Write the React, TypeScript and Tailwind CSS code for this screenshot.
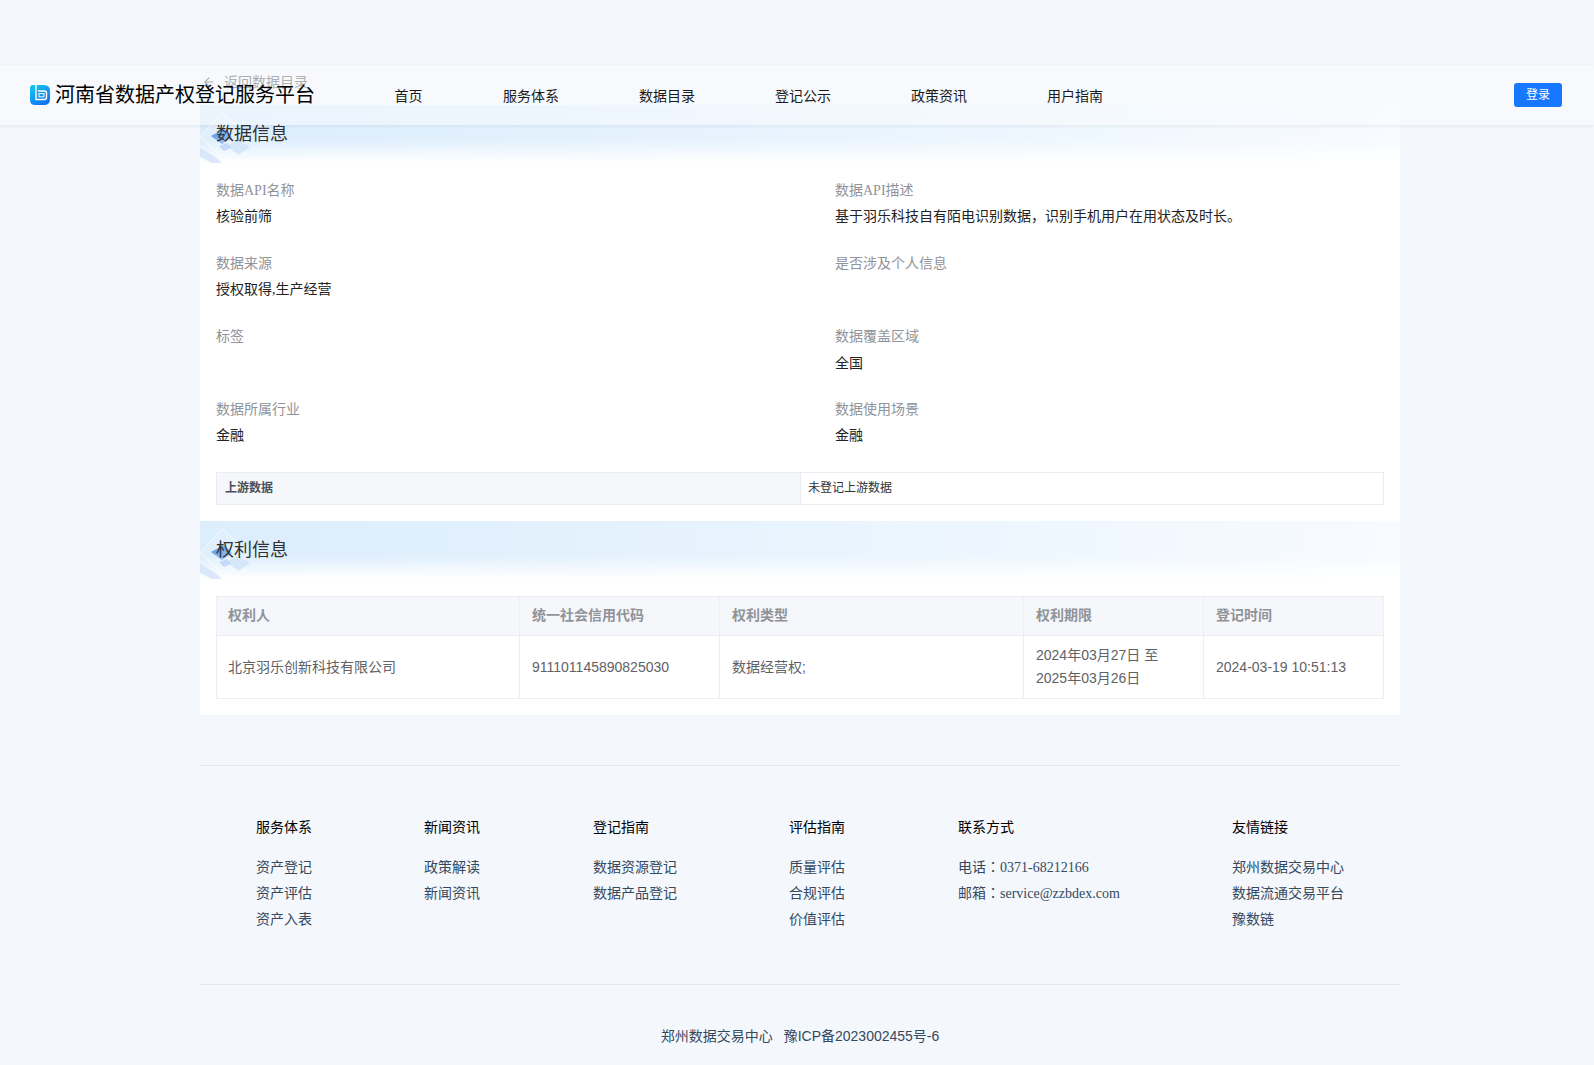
import { ArrowLeft } from 'lucide-react';

const cjk = 'font-["Liberation_Sans","Noto_Sans_CJK_SC",sans-serif]';
const serif = 'font-["Liberation_Serif","Noto_Sans_CJK_SC",serif]';

const nav = [
  { label: '首页', w: 'w-[108.5px]' },
  { label: '服务体系', w: 'w-[136px]' },
  { label: '数据目录', w: 'w-[136px]' },
  { label: '登记公示', w: 'w-[136px]' },
  { label: '政策资讯', w: 'w-[136px]' },
  { label: '用户指南', w: 'w-[136px]' },
];

const fields = [
  [
    { label: '数据API名称', value: '核验前筛' },
    { label: '数据API描述', value: '基于羽乐科技自有陌电识别数据，识别手机用户在用状态及时长。' },
  ],
  [
    { label: '数据来源', value: '授权取得,生产经营' },
    { label: '是否涉及个人信息', value: '' },
  ],
  [
    { label: '标签', value: '' },
    { label: '数据覆盖区域', value: '全国' },
  ],
  [
    { label: '数据所属行业', value: '金融' },
    { label: '数据使用场景', value: '金融' },
  ],
];

const footerCols = [
  { title: '服务体系', links: ['资产登记', '资产评估', '资产入表'], w: 'w-[168px]' },
  { title: '新闻资讯', links: ['政策解读', '新闻资讯'], w: 'w-[169px]' },
  { title: '登记指南', links: ['数据资源登记', '数据产品登记'], w: 'w-[196px]' },
  { title: '评估指南', links: ['质量评估', '合规评估', '价值评估'], w: 'w-[169px]' },
  { title: '联系方式', links: [], w: 'w-[274px]' },
  { title: '友情链接', links: ['郑州数据交易中心', '数据流通交易平台', '豫数链'], w: 'w-[160px]' },
];

function Logo() {
  return (
    <svg width="20" height="20" viewBox="0 0 20 20" className="shrink-0">
      <defs>
        <linearGradient id="logo" x1="0" y1="0" x2="0.6" y2="1">
          <stop offset="0" stopColor="#14cdea" />
          <stop offset="1" stopColor="#1473f5" />
        </linearGradient>
      </defs>
      <path d="M3 0H14Q20 0 20 6V14Q20 20 14 20H5Q0 20 0 15V3Q0 0 3 0Z" fill="url(#logo)" />
      <path d="M6 0V14.5H14.5Q16.5 14.5 16.5 12.5V8Q16.5 6 14.5 6H8" fill="none" stroke="#fff" strokeWidth="1.4" />
      <rect x="9" y="8.6" width="5" height="3.2" fill="none" stroke="#fff" strokeOpacity="0.9" strokeWidth="1.1" />
    </svg>
  );
}

function BandDecor({ id }: { id: string }) {
  return (
    <svg width="60" height="60" viewBox="0 0 60 60" className="absolute left-0 top-0 blur-[0.7px]">
      <defs>
        <linearGradient id={id} x1="0" y1="0" x2="1" y2="1">
          <stop offset="0" stopColor="#4f93ec" />
          <stop offset="1" stopColor="#a9cbf5" />
        </linearGradient>
      </defs>
      <path d="M22 8L50 32L26 56L0 32Z" fill="#ffffff" fillOpacity="0.15" stroke="#ffffff" strokeOpacity="0.7" />
      <path d="M11 31L24 24L32 32L22 39Z" fill={`url(#${id})`} />
      <path d="M27 41L38 35L50 42L38 50Z" fill="#cfe2f8" opacity="0.75" />
      <path d="M0 43L14 51L22 58H12L0 52Z" fill="#cfe2f8" opacity="0.75" />
      <path d="M19 41L27 38L31 43L24 46Z" fill="#b5d2f5" opacity="0.75" />
    </svg>
  );
}

function SectionTitle({ title, id }: { title: string; id: string }) {
  return (
    <div className="relative h-[58px] bg-gradient-to-r from-[#dcedfc] via-[#e8f4fe] to-[#f8fbff]">
      <div className="absolute inset-0 bg-gradient-to-b from-transparent from-[60%] to-white" />
      <BandDecor id={id} />
      <h2 className="relative pl-4 pt-[16px] text-[18px] leading-[26px] font-normal text-[#303133]">{title}</h2>
    </div>
  );
}

export default function App() {
  return (
    <div className={`relative min-h-[1065px] bg-[#f4f7fc] ${cjk}`}>
      <header className="absolute left-0 right-0 top-[65px] z-10 flex h-[60px] items-center bg-[#fafbfe]/50 shadow-[0_1px_4px_rgba(0,21,41,0.08)]">
        <div className="ml-[30px] flex w-[364.5px] items-center gap-[5px]">
          <Logo />
          <span className="text-[20px] leading-[28px] whitespace-nowrap text-black">河南省数据产权登记服务平台</span>
        </div>
        <nav className="flex pt-[2px]">
          {nav.map((n) => (
            <a key={n.label} className={`${n.w} text-[14px] leading-[20px] text-[#1a1a1a]`}>{n.label}</a>
          ))}
        </nav>
        <button className="absolute right-[32px] top-[18px] h-[24px] w-[48px] rounded-[3px] bg-[#1677ff] text-[12px] text-white">登录</button>
      </header>

      <main className="ml-[200px] w-[1200px] pt-[72px]">
        <div className="flex h-[33px] items-center pb-[13px] pl-[2px] text-[14px] leading-[20px] text-[#606266]">
          <ArrowLeft size={14} />
          <span className="ml-[8px]">返回数据目录</span>
        </div>

        <section className="bg-white pb-[16px]">
          <SectionTitle title="数据信息" id="d1" />
          <div className="px-4 pt-[18px]">
            {fields.map((row, i) => (
              <div key={i} className="grid h-[73px] grid-cols-[619px_1fr]">
                {row.map((f) => (
                  <div key={f.label} className={serif}>
                    <div className="text-[14px] leading-[20px] text-[#909399]">{f.label}</div>
                    <div className={`${i === 2 ? 'mt-[7px]' : 'mt-[6px]'} text-[14px] leading-[20px] text-[#222222]`}>{f.value}</div>
                  </div>
                ))}
              </div>
            ))}
            <div className="-mt-[1px] flex h-[33px] border border-[#e9ecf5] text-[12px]">
              <div className="flex w-[584px] items-center border-r border-[#e9ecf5] bg-[#f5f7fa] pb-[2px] pl-2 font-bold text-[#4a4f59]">上游数据</div>
              <div className="flex flex-1 items-center pb-[2px] pl-[7px] text-[#303133]">未登记上游数据</div>
            </div>
          </div>
        </section>

        <section className="bg-white pb-[16px]">
          <SectionTitle title="权利信息" id="d2" />
          <div className="px-4 pt-[17px]">
            <div className="border border-[#ebeef5] text-[14px] text-[#606266]">
              <div className="grid h-[39px] grid-cols-[302px_200px_304px_180px_1fr] items-center border-b border-[#ebeef5] bg-[#f5f7fa] font-bold text-[#909399]">
                <div className="flex h-full items-center px-[11px] pb-[2px]">权利人</div>
                <div className="flex h-full items-center border-l border-[#ebeef5] px-3 pb-[2px]">统一社会信用代码</div>
                <div className="flex h-full items-center border-l border-[#ebeef5] px-3 pb-[2px]">权利类型</div>
                <div className="flex h-full items-center border-l border-[#ebeef5] px-3 pb-[2px]">权利期限</div>
                <div className="flex h-full items-center border-l border-[#ebeef5] px-3 pb-[2px]">登记时间</div>
              </div>
              <div className="grid h-[62px] grid-cols-[302px_200px_304px_180px_1fr] items-center">
                <div className="px-[11px]">北京羽乐创新科技有限公司</div>
                <div className="flex h-full items-center border-l border-[#ebeef5] px-3">911101145890825030</div>
                <div className="flex h-full items-center border-l border-[#ebeef5] px-3">数据经营权;</div>
                <div className="flex h-full items-center border-l border-[#ebeef5] px-3 leading-[23px]">2024年03月27日 至<br />2025年03月26日</div>
                <div className="flex h-full items-center border-l border-[#ebeef5] px-3">2024-03-19 10:51:13</div>
              </div>
            </div>
          </div>
        </section>

        <footer className="mt-[50px]">
          <div className="flex h-[220px] border-y border-[#e4e8f0] pl-[56px] pt-[48px] text-[14px] leading-[26px]">
            {footerCols.map((c) => (
              <div key={c.title} className={c.w}>
                <div className="mb-[14px] text-black">{c.title}</div>
                {c.links.map((l) => (
                  <div key={l} className="text-[#34495e]">{l}</div>
                ))}
                {c.title === '联系方式' && (
                  <div className='pt-[1px] font-["Liberation_Serif","Noto_Sans_CJK_TC",serif] text-[#34495e]'>
                    <div>电话：0371-68212166</div>
                    <div>邮箱：service@zzbdex.com</div>
                  </div>
                )}
              </div>
            ))}
          </div>
          <div className="pt-[41px] text-center text-[14px] leading-[20px] text-[#34495e]">
            郑州数据交易中心<span className="ml-[11px]">豫ICP备2023002455号-6</span>
          </div>
        </footer>
      </main>
    </div>
  );
}
